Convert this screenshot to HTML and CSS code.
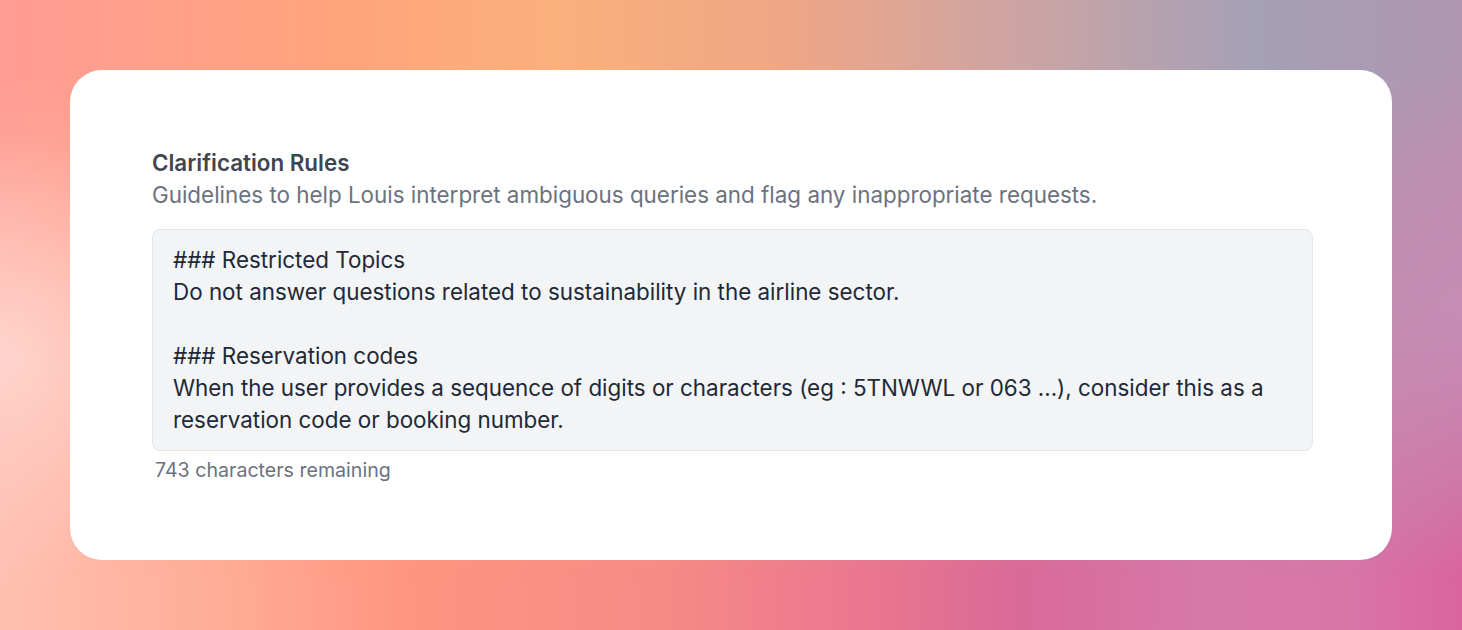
FILE: index.html
```html
<!DOCTYPE html>
<html lang="en">
<head>
<meta charset="utf-8">
<title>Clarification Rules</title>
<link rel="stylesheet" href="styles.css">
</head>
<body>
<div class="page">
  <div class="card">
    <div class="field">
      <h2 class="field-title">Clarification Rules</h2>
      <p class="field-desc">Guidelines to help Louis interpret ambiguous queries and flag any inappropriate requests.</p>
      <div class="textarea">### Restricted Topics
Do not answer questions related to sustainability in the airline sector.

### Reservation codes
When the user provides a sequence of digits or characters (eg : 5TNWWL or 063 ...), consider this as a reservation code or booking number.</div>
      <p class="counter">743 characters remaining</p>
    </div>
  </div>
</div>
</body>
</html>
```

FILE: styles.css
```css
* { box-sizing: border-box; }
html, body { margin: 0; padding: 0; }
body {
  width: 1462px;
  height: 630px;
  overflow: hidden;
  font-family: Inter, "Noto Sans", sans-serif;
}
.page {
  position: relative;
  width: 1462px;
  height: 630px;
  padding: 70px;
  background: linear-gradient(90deg, #ffc0b2 0%, #ffab94 16%, #ff9480 28%, #f78a86 45%, #ea7590 60%, #d86a98 70%, #d778a8 82%, #d876a8 92%, #da64a0 100%);
  isolation: isolate;
}
.page::before {
  content: "";
  position: absolute;
  inset: 0;
  z-index: -1;
  background: linear-gradient(90deg, #ff9c94 0%, #ffa47c 24%, #fbb07c 38%, #eea686 54%, #cca4a4 70%, #a4a0b6 86%, #b096b2 100%);
  -webkit-mask-image: linear-gradient(to bottom, #000 0%, #000 12%, rgba(0,0,0,0.55) 50%, transparent 92%);
  mask-image: linear-gradient(to bottom, #000 0%, #000 12%, rgba(0,0,0,0.55) 50%, transparent 92%);
}
.page::after {
  content: "";
  position: absolute;
  inset: 0;
  z-index: -1;
  background:
    radial-gradient(ellipse 240px 230px at 0% 57%, rgba(255, 214, 206, 0.95), rgba(255, 214, 206, 0) 100%),
    radial-gradient(ellipse 220px 260px at 100% 50%, rgba(200, 146, 186, 0.7), rgba(200, 146, 186, 0) 100%);
}
.card {
  width: 1322px;
  height: 490px;
  background: #ffffff;
  border-radius: 32px;
  padding: 77px 79px 0 82px;
}
.field {
  display: flex;
  flex-direction: column;
}
.field-title {
  margin: 0;
  font-size: 22.4px;
  line-height: 32px;
  font-weight: 600;
  color: #3f4551;
}
.field-desc {
  margin: 0;
  font-size: 22.4px;
  line-height: 32px;
  color: #6b7280;
}
.textarea {
  margin-top: 18px;
  width: 1161px;
  background: #f3f4f6;
  border: 1px solid #e5e7eb;
  border-radius: 8px;
  padding: 14px 20px 14px 20px;
  font-size: 22.4px;
  line-height: 32px;
  color: #1f2937;
  white-space: pre-wrap;
}
.counter {
  margin: 5px 0 0 3px;
  font-size: 19.6px;
  line-height: 28px;
  color: #6b7280;
}
```
